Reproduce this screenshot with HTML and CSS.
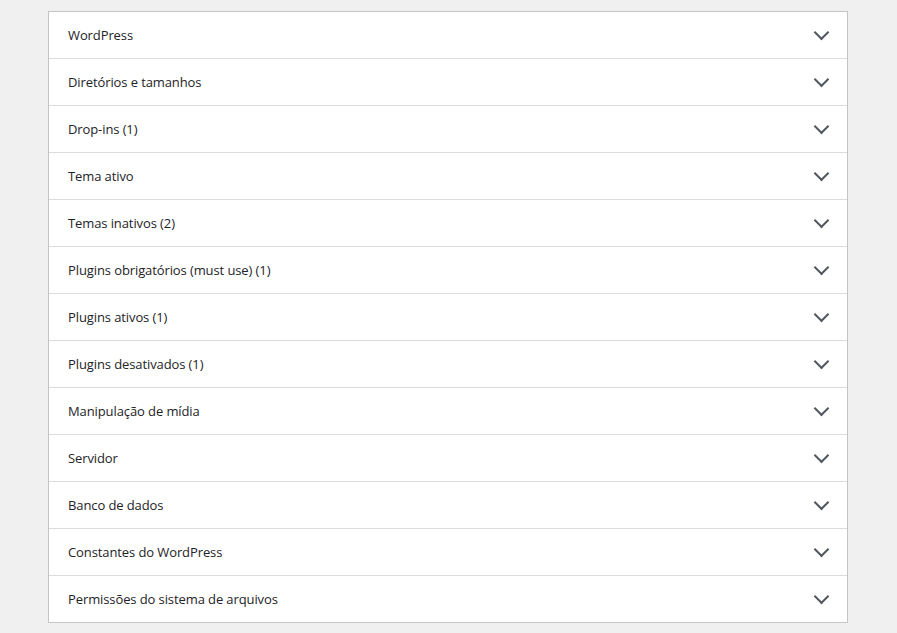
FILE: index.html
```html
<!DOCTYPE html>
<html lang="pt-BR">
<head>
  <meta charset="UTF-8">
  <meta name="viewport" content="width=device-width, initial-scale=1.0">
  <title>Saúde do site - Informações</title>
  <link rel="stylesheet" href="styles.css">
</head>
<body>
  <div class="accordion">
    <button class="accordion-trigger"><span class="title">WordPress</span><span class="icon"></span></button>
    <button class="accordion-trigger"><span class="title">Diretórios e tamanhos</span><span class="icon"></span></button>
    <button class="accordion-trigger"><span class="title">Drop-ins (1)</span><span class="icon"></span></button>
    <button class="accordion-trigger"><span class="title">Tema ativo</span><span class="icon"></span></button>
    <button class="accordion-trigger"><span class="title">Temas inativos (2)</span><span class="icon"></span></button>
    <button class="accordion-trigger"><span class="title">Plugins obrigatórios (must use) (1)</span><span class="icon"></span></button>
    <button class="accordion-trigger"><span class="title">Plugins ativos (1)</span><span class="icon"></span></button>
    <button class="accordion-trigger"><span class="title">Plugins desativados (1)</span><span class="icon"></span></button>
    <button class="accordion-trigger"><span class="title">Manipulação de mídia</span><span class="icon"></span></button>
    <button class="accordion-trigger"><span class="title">Servidor</span><span class="icon"></span></button>
    <button class="accordion-trigger"><span class="title">Banco de dados</span><span class="icon"></span></button>
    <button class="accordion-trigger"><span class="title">Constantes do WordPress</span><span class="icon"></span></button>
    <button class="accordion-trigger"><span class="title">Permissões do sistema de arquivos</span><span class="icon"></span></button>
  </div>
</body>
</html>
```

FILE: styles.css
```css
body {
  margin: 0;
  padding: 11px 49px 0 48px;
  background-color: #f0f0f1;
  font-family: "Open Sans", "Noto Sans", sans-serif;
  color: #1d2327;
}
.accordion {
  display: flex;
  flex-direction: column;
  width: 798px;
  border: 1px solid #c3c4c7;
  background-color: #fff;
}
.accordion-trigger {
  display: flex;
  align-items: center;
  justify-content: space-between;
  height: 47px;
  padding: 0 19px 0 19px;
  border: 0;
  border-bottom: 1px solid #dcdcde;
  background: #fff;
  font-family: inherit;
  font-size: 13px;
  font-weight: 500;
  letter-spacing: -0.1px;
  color: #1d2327;
  text-align: left;
  cursor: pointer;
}
.accordion-trigger:last-child {
  height: 46px;
  border-bottom: 0;
}
.icon {
  width: 9px;
  height: 9px;
  margin-right: 1px;
  margin-top: -5px;
  border-right: 2.5px solid #50575e;
  border-bottom: 2.5px solid #50575e;
  transform: rotate(45deg);
}
```
